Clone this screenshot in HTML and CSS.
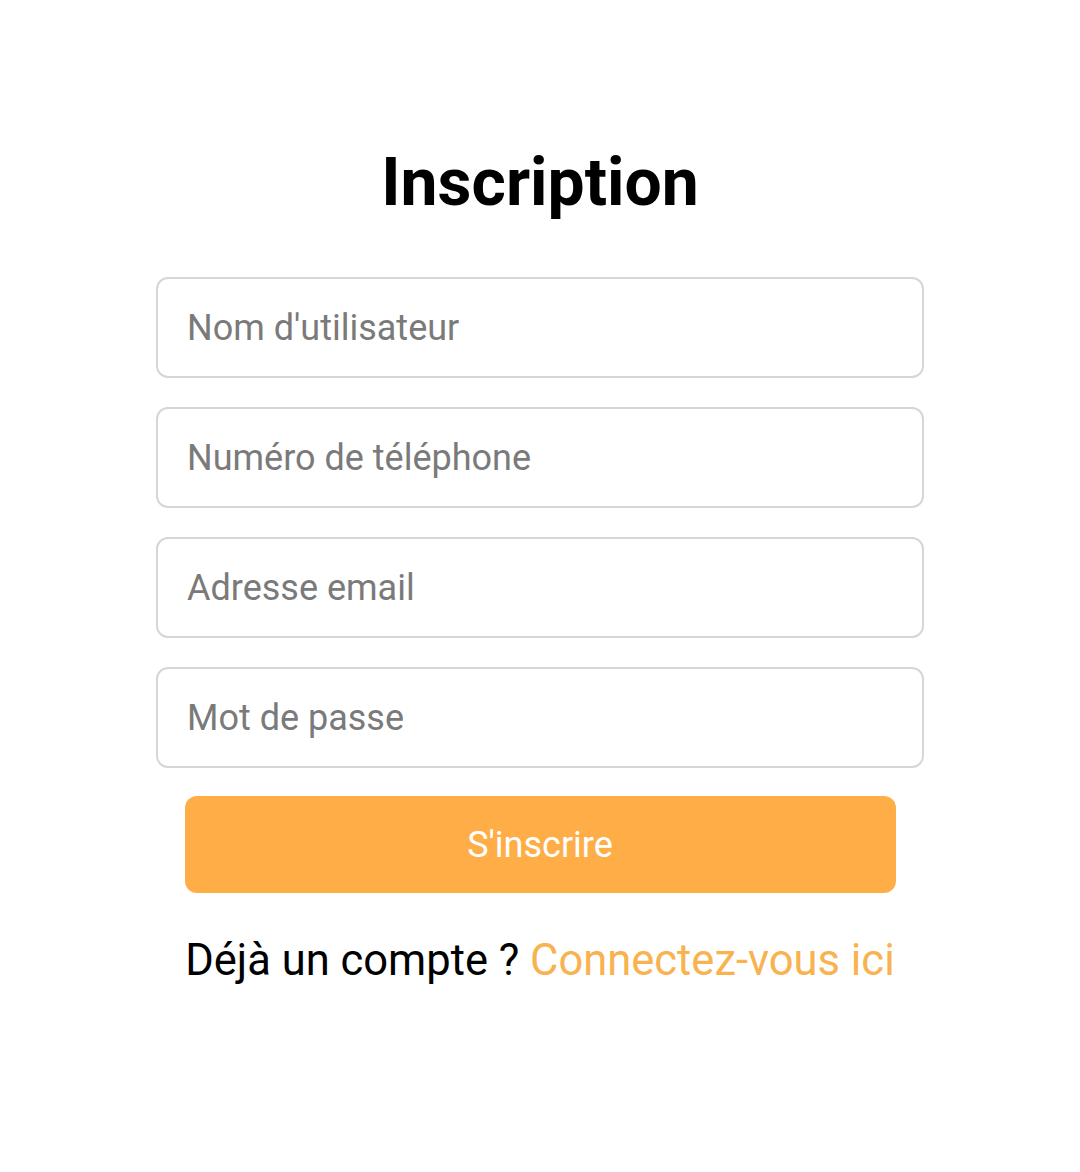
FILE: index.html
```html
<!DOCTYPE html>
<html lang="fr">
<head>
<meta charset="utf-8">
<title>Inscription</title>
<link rel="stylesheet" href="styles.css">
</head>
<body>
<main class="page">
  <h1 class="title">Inscription</h1>
  <form class="form">
    <input class="field" type="text" placeholder="Nom d'utilisateur">
    <input class="field" type="tel" placeholder="Numéro de téléphone">
    <input class="field" type="email" placeholder="Adresse email">
    <input class="field" type="password" placeholder="Mot de passe">
    <button class="submit" type="button">S'inscrire</button>
  </form>
  <p class="login">Déjà un compte ? <a class="login-link" href="#">Connectez-vous ici</a></p>
</main>
</body>
</html>
```
FILE: styles.css
```css
html, body {
  margin: 0;
  padding: 0;
  background: #ffffff;
}
body {
  font-family: Roboto, "Noto Sans", sans-serif;
  color: #000;
}
.page {
  display: flex;
  flex-direction: column;
  align-items: center;
  padding-top: 148px;
}
.title {
  margin: 0;
  font-size: 66px;
  line-height: 70px;
  font-weight: 700;
  color: #000;
}
.form {
  width: 768px;
  margin-top: 59px;
  display: flex;
  flex-direction: column;
  align-items: center;
  gap: 29px;
}
.field {
  box-sizing: border-box;
  width: 768px;
  height: 101px;
  border: 2px solid #d6d6d6;
  border-radius: 12px;
  padding: 0 0 0 29px;
  font-family: Roboto, sans-serif;
  font-size: 36px;
  color: #333;
  outline: none;
  background: #fff;
}
.field::placeholder {
  color: #7a7a7a;
}
.submit {
  box-sizing: border-box;
  width: 711px;
  height: 97px;
  margin-top: -1px;
  border: none;
  border-radius: 12px;
  background: #ffad47;
  color: #fff;
  font-family: Roboto, sans-serif;
  font-size: 36px;
  font-weight: 400;
}
.login {
  margin: 38px 0 0;
  font-size: 43.5px;
  line-height: 60px;
  color: #000;
}
.login-link {
  color: #f8b24f;
  text-decoration: none;
}
```
